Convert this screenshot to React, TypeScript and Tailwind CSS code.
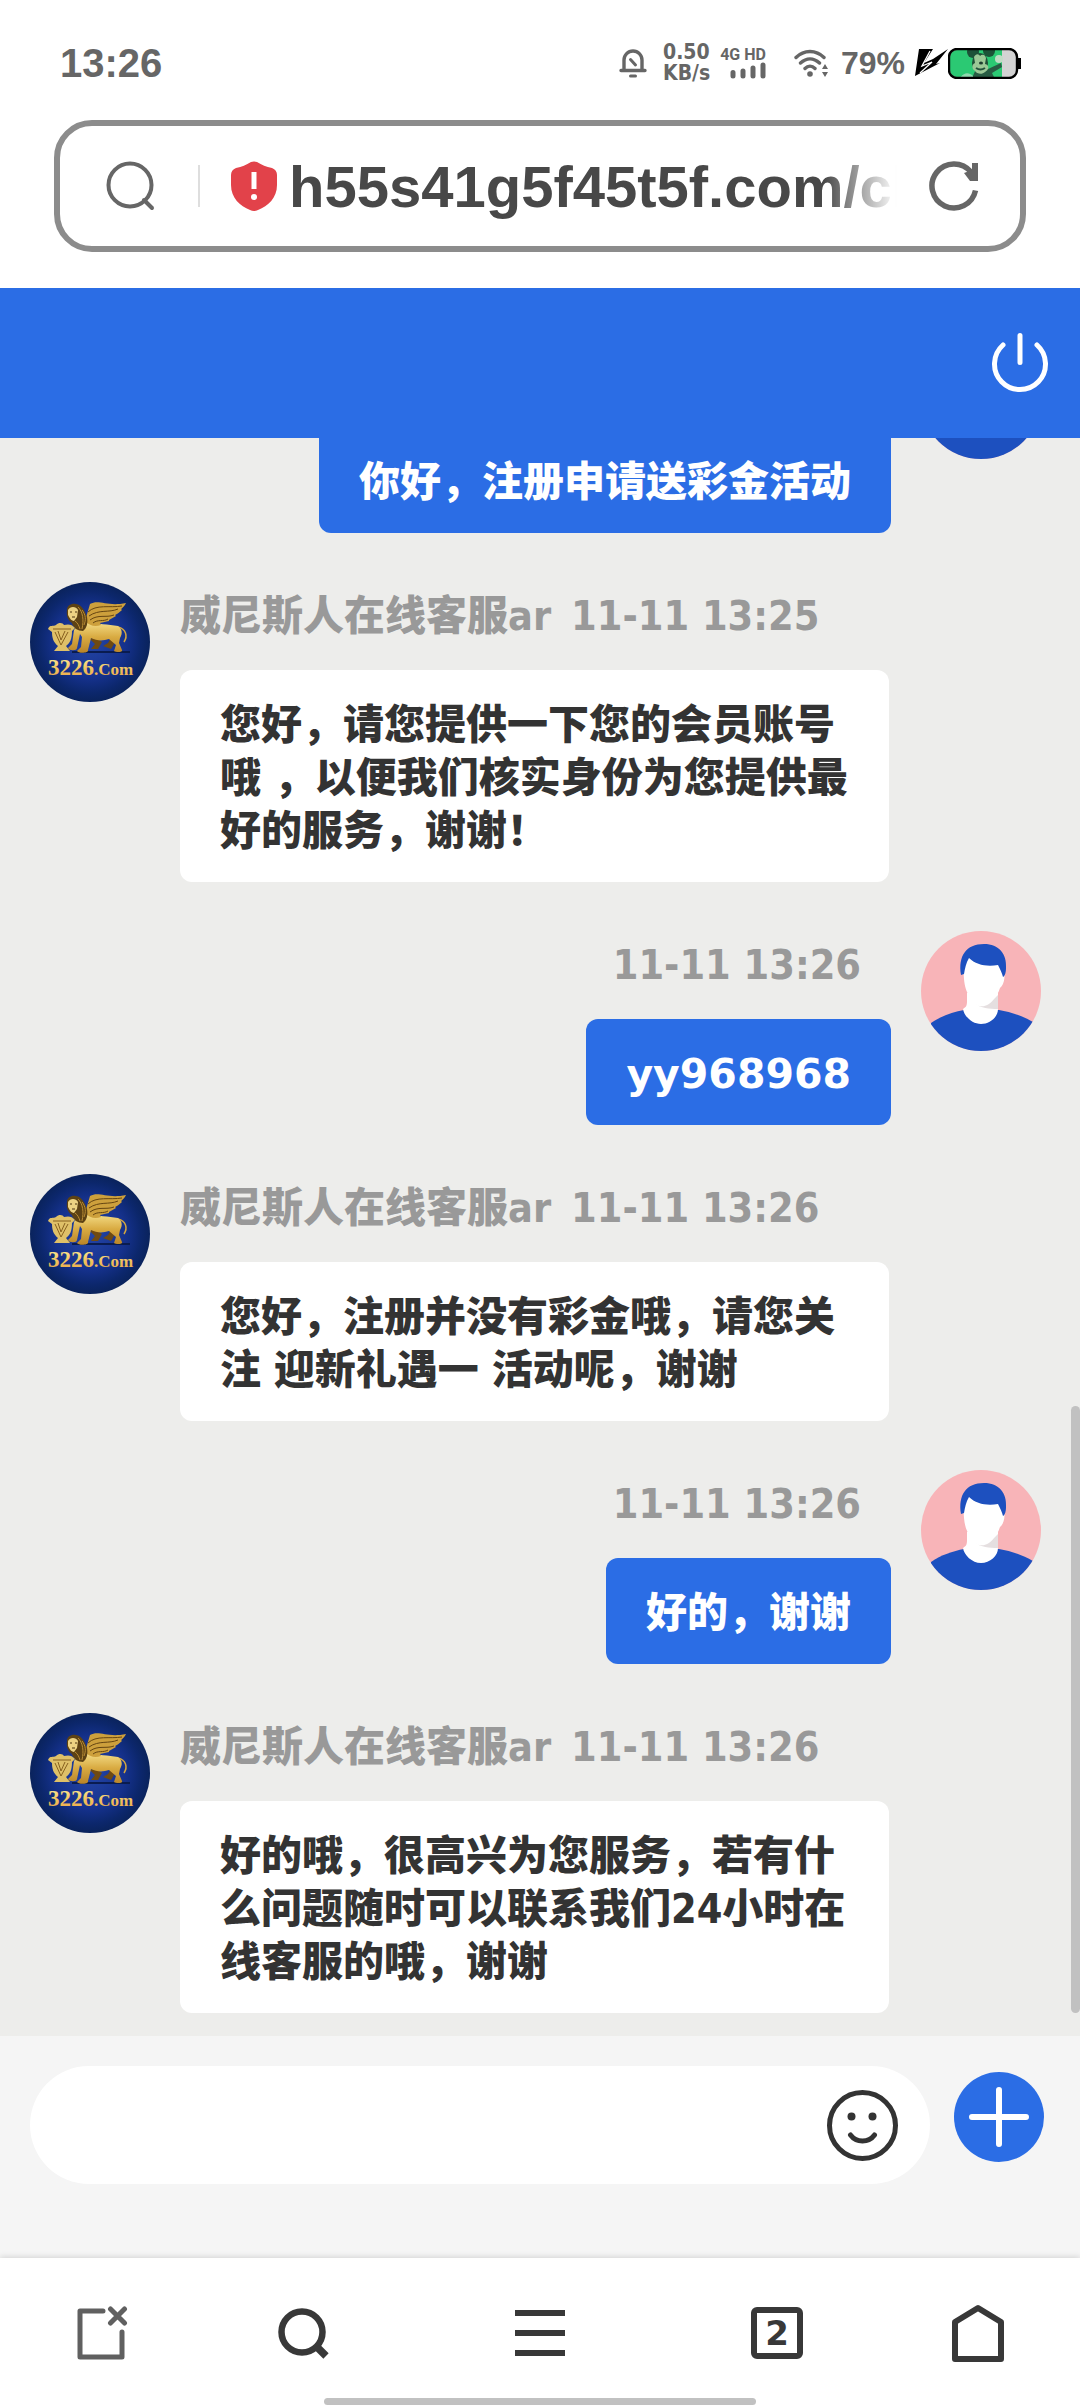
type Message = {
  id: number;
  from: 'agent' | 'user';
  time: string;
  text: string;
};

const AGENT_NAME = '威尼斯人在线客服ar';

const messages: Message[] = [
  { id: 1, from: 'user', time: '11-11 13:25', text: '你好，注册申请送彩金活动' },
  {
    id: 2,
    from: 'agent',
    time: '11-11 13:25',
    text: '您好，请您提供一下您的会员账号哦 ，以便我们核实身份为您提供最好的服务，谢谢！',
  },
  { id: 3, from: 'user', time: '11-11 13:26', text: 'yy968968' },
  {
    id: 4,
    from: 'agent',
    time: '11-11 13:26',
    text: '您好，注册并没有彩金哦，请您关注 迎新礼遇一 活动呢，谢谢',
  },
  { id: 5, from: 'user', time: '11-11 13:26', text: '好的，谢谢' },
  {
    id: 6,
    from: 'agent',
    time: '11-11 13:26',
    text: '好的哦，很高兴为您服务，若有什么问题随时可以联系我们24小时在线客服的哦，谢谢',
  },
];

const AgentAvatar = () => (
  <svg viewBox="0 0 120 120" className="size-[120px] shrink-0" role="img" aria-label="3226.Com">
    <defs>
      <radialGradient id="agentBg">
        <stop offset="0" stopColor="#2445a6" />
        <stop offset="0.6" stopColor="#15318c" />
        <stop offset="0.85" stopColor="#0c276c" />
        <stop offset="1" stopColor="#0a235c" />
      </radialGradient>
      <linearGradient id="gold" x1="0" y1="0" x2="0" y2="1">
        <stop offset="0" stopColor="#f5e08c" />
        <stop offset="0.5" stopColor="#d9ab42" />
        <stop offset="1" stopColor="#b98428" />
      </linearGradient>
      <linearGradient id="goldText" x1="0" y1="0" x2="0" y2="1">
        <stop offset="0" stopColor="#fdf3a0" />
        <stop offset="0.6" stopColor="#f0c05a" />
        <stop offset="1" stopColor="#e8a04c" />
      </linearGradient>
    </defs>
    <circle cx="60" cy="60" r="60" fill="url(#agentBg)" />
    <path d="M42 70h58" stroke="#0a1c50" strokeWidth="2" />
    {/* tail */}
    <path d="M88 45c8 2 10 9 6 15" fill="none" stroke="#d3a640" strokeWidth="1.5" />
    {/* far legs */}
    <path d="M64 55l8 5-4 7h-7l4-5-5-5zM82 54l2 8-3 5-8-3 5-3z" fill="#6f4a12" />
    {/* body and legs */}
    <path
      d="M48 42l10-3c10 4 20 3 30 5 4 3 5 7 2 12l-1 5 3 7c1 2-5 3-8 1l2-6-7-6c-6 2-12 2-18-1l-3 12c1 3-9 4-11 1l4-4 1-10-2-3-3 14c0 3-8 3-9 0l4-4 2-14z"
      fill="url(#gold)"
    />
    {/* wing */}
    <path
      d="M55 39l5-17c9-5 17 3 36-1-2 4-5 6-5 6l1 1c-3 3-7 5-7 5l1 1-7 4 0 1-9 2 1 2c-6 2-11 1-16-4z"
      fill="#cda03c"
    />
    <path
      d="M58 30c8-8 22-4 34-6M59 34c10-7 20-3 29-7M60 38c8-6 16-2 24-5M63 41c5-4 10-1 15-4"
      fill="none"
      stroke="#654512"
      strokeWidth="1"
    />
    {/* mane and face */}
    <path
      d="M37 28c0-5 5-7 9-6 6 1 9 7 11 13 1 6 0 11-4 14-5 0-10-3-11-8-4-2-6-8-5-13z"
      fill="#5d4214"
    />
    <path d="M48 25c5 5 6 13 4 22M45 39c3 2 4 5 5 8M52 28c4 5 4 10 2 15" fill="none" stroke="#b98c34" />
    <path d="M38 28c2-4 8-4 10 0l-1 7-3 4c-3 0-5-4-6-6z" fill="#ecd283" />
    <path d="M40 30h2M45 30h2M42 35h3" stroke="#4c3410" />
    {/* shield */}
    <path
      d="M18 47c2-5 5-2 8-4 3-3 7-2 8 0 4-1 8-1 11 3l-3 3c0 8-2 12-6 15l4 5H24l4-5c-5-4-6-9-6-14z"
      fill="#dfc068"
    />
    <path d="M25 50l6 13 7-13M28 49l3 9 4-9M23 47h18" fill="none" stroke="#87601f" />
    {/* lettering */}
    <g fontFamily="Liberation Serif, serif" fontWeight="700">
      <text x="18" y="93" fontSize="23" fill="url(#goldText)">
        3226<tspan fontSize="17">.Com</tspan>
      </text>
    </g>
  </svg>
);

const UserAvatar = () => (
  <svg viewBox="0 0 120 120" className="size-[120px] shrink-0 rounded-full" role="img" aria-label="我">
    <rect width="120" height="120" fill="#f8b4b8" />
    <path d="M10 92c10-7 22-11 33-13h35c12 2 24 6 34 12v29H10z" fill="#1d50bf" />
    <path d="M46 62h31v16c0 8-8 15-17 15s-17-8-18-15c3-2 4-3 4-8z" fill="#fff" />
    <path d="M54 73c6 4 13 3 19-5l4-4v14c-9 0-17-1-23-5z" fill="#e5dfe0" />
    <path d="M42 35c1-10 9-14 19-14s19 7 20 16c4 5 3 16-2 20-3 10-10 16-18 16-10 0-17-11-18-25z" fill="#fff" />
    <path
      d="M40 44c-3-19 5-31 23-31 15 0 23 10 22 24 0 4-1 8-3 9-1-4-3-8-5-12-11 2-22 0-29-7-3 5-4 10-5 16z"
      fill="#1d50bf"
    />
  </svg>
);

const ChatMessage = ({ message }: { message: Message }) => {
  if (message.from === 'user') {
    return (
      <li className="mb-[49px] flex shrink-0 justify-end gap-[30px] pr-[39px] pl-[191px]">
        <div className="flex min-w-0 flex-col items-end">
          <time className="h-[88px] pt-2 pr-[30px] text-[#999]">{message.time}</time>
          <p className="rounded-xl bg-[#2b6de5] px-10 pt-[29px] pb-6 font-['DejaVu_Sans','Noto_Sans_CJK_SC',sans-serif] text-white">
            {message.text}
          </p>
        </div>
        <UserAvatar />
      </li>
    );
  }

  return (
    <li className="mb-[49px] flex shrink-0 gap-[30px] pr-[191px] pl-[30px] last:mb-[23px]">
      <AgentAvatar />
      <div className="flex min-w-0 flex-col items-start">
        <div className="flex h-[88px] gap-5 pt-2 whitespace-nowrap text-[#999]">
          <span>{AGENT_NAME}</span>
          <time>{message.time}</time>
        </div>
        <p className="rounded-xl bg-white px-10 pt-[29px] pb-6 text-[#333]">{message.text}</p>
      </div>
    </li>
  );
};

const StatusBar = () => (
  <div className="flex h-[120px] items-center pt-1.5 pr-[59px] pl-[60px] text-[#666]">
    <time className="flex-1 text-[40px] leading-none font-bold">13:26</time>

    {/* Silent bell */}
    <svg viewBox="0 0 28 30" className="mr-[16px] h-[30px] w-[28px]" fill="none" stroke="currentColor" strokeLinecap="round">
      <path d="M5 22V12a9 9 0 0 1 18 0v10M2 22.500h24" strokeWidth="3.400" />
      <path d="M11.500 11.500l5 5.500" strokeWidth="3" />
      <path d="M11.500 28h5" strokeWidth="3" />
    </svg>

    <div className="mr-[10px] font-['DejaVu_Sans_Condensed'] text-[21px] leading-[21px] font-bold">
      <div>0.50</div>
      <div>KB/s</div>
    </div>

    <div className="mr-[28px] flex flex-col items-end">
      <span className="font-[Roboto] text-[16px] leading-[14px] font-bold">4G HD</span>
      <svg viewBox="0 0 36 17" className="h-[17px] w-[36px]" stroke="currentColor" strokeWidth="5" strokeLinecap="round">
        <path d="M3 10.500v3.500M13 9v5M23 6v8M33 3v11" />
      </svg>
    </div>

    <svg viewBox="0 0 34 28" className="mr-[13px] h-[28px] w-[34px]" fill="none" stroke="currentColor" strokeWidth="3.400" strokeLinecap="round">
      <path d="M2 8.500C10 .5 22 .5 30 8.500M6.500 14c6-5.500 13-5.500 19 0M11 19.500c3-3 7-3 10 0" />
      <circle cx="16" cy="25" r="2.800" fill="currentColor" stroke="none" />
      <path d="M31 15l3 5h-6zM31 28l3-5h-6z" fill="currentColor" stroke="none" />
    </svg>

    <span className="mr-[10px] text-[32px] leading-none font-bold">79%</span>

    {/* Charging bolt */}
    <svg viewBox="0 0 33 28" className="h-[28px] w-[33px]" fill="#000">
      <path d="M4 0h14L9 14l9-4L33 0 21 15l4-1L0 27z" />
      <path d="M15 2L7 17l10-4L5 24" fill="none" stroke="#fff" strokeWidth="1.300" />
    </svg>

    <svg viewBox="0 0 73 31" className="h-[31px] w-[73px]">
      <defs>
        <clipPath id="batteryClip">
          <rect x="2" y="2" width="66" height="27" rx="7" />
        </clipPath>
      </defs>
      <g clipPath="url(#batteryClip)">
        <rect width="73" height="31" fill="#d3d3d3" />
        <rect width="54" height="31" fill="#2bc973" />
        <circle cx="25" cy="4" r="6" fill="#1c5238" />
        <circle cx="41" cy="3" r="6" fill="#1c5238" />
        <path d="M24 30l4-9c4-3 9-3 12 0l13-6 1 4-10 6 3 6z" fill="#285c43" />
        <ellipse cx="32" cy="15" rx="8" ry="10" fill="#204f38" />
        <path d="M26 9c2-4 5-3 6-1 2-2 5-2 6 2l-1 6c5 1 4 6 0 8-3 3-8 2-10-1-3-2-4-6 0-8z" fill="#9bc896" />
        <path d="M28 20c3 2 6 2 9 0" fill="none" stroke="#23523b" strokeWidth="2" />
        <ellipse cx="33" cy="15" rx="2" ry="1.500" fill="#1d3c2e" />
        <circle cx="51" cy="11" r="4" fill="#bfdcc4" />
        <path d="M12 30c4-6 9-6 13-2v3z" fill="#8fd9ae" />
      </g>
      <rect x="1" y="1" width="68" height="29" rx="8" fill="none" stroke="#000" strokeWidth="2.400" />
      <path d="M70 10h3v11h-3z" />
    </svg>
  </div>
);

const AddressBar = () => (
  <div className="mx-[54px] mb-9 flex h-[132px] items-center rounded-[38px] border-6 border-[#8c8c8c] bg-white pr-[41px] pl-[46px]">
    <button type="button" aria-label="搜索" className="mr-[42px] shrink-0">
      <svg viewBox="0 0 50 50" className="size-[50px]" fill="none" stroke="#666" strokeWidth="4">
        <circle cx="24" cy="24" r="21.500" />
        <path d="M38 39l8 8" strokeLinecap="round" />
      </svg>
    </button>
    <span className="mr-[31px] h-[42px] w-0.5 shrink-0 bg-[#dedede]" />
    <svg viewBox="0 0 46 50" className="mr-[12px] h-[50px] w-[46px] shrink-0">
      <path
        d="M20 1q3-1 6 0c5 3 9 5 15 6q5 2 5 7v10c0 13-9 21-19 25q-4 2-8 0C9 45 0 37 0 24V14q0-5 5-7c6-1 10-3 15-6z"
        fill="#e2424a"
      />
      <path d="M20.500 11h5v17h-5z" fill="#fff" />
      <circle cx="23" cy="36" r="3" fill="#fff" />
    </svg>
    <input
      type="text"
      aria-label="网址"
      defaultValue="h55s41g5f45t5f.com/ch"
      className="h-20 min-w-0 flex-1 bg-transparent text-[58px] font-bold text-[#484848] outline-none [mask-image:linear-gradient(to_right,black_88%,transparent)]"
    />
    <button type="button" aria-label="刷新" className="ml-[32px] shrink-0">
      <svg viewBox="0 0 50 50" className="size-[50px]" fill="none" stroke="#666" strokeWidth="5.500">
        <path d="M46.500 29.500A22 22 0 1 1 42 11" />
        <path d="M43 2h6v18h-8l-6-8 8-3z" fill="#666" stroke="none" />
      </svg>
    </button>
  </div>
);

const Composer = () => (
  <div className="flex shrink-0 gap-6 bg-[#f5f5f5] pt-[30px] pr-9 pb-[74px] pl-[30px]">
    <div className="flex h-[118px] flex-1 items-center rounded-full bg-white pr-8 pl-12">
      <input type="text" aria-label="输入消息" className="h-full min-w-0 flex-1 bg-transparent outline-none" />
      <button type="button" aria-label="表情">
        <svg viewBox="0 0 71 71" className="size-[71px]" fill="none" stroke="#333" strokeWidth="5">
          <circle cx="35.500" cy="35.500" r="33" />
          <path d="M23.500 45c6 8 18 8 24 0" strokeLinecap="round" />
          <circle cx="24.500" cy="26.500" r="4" fill="#333" stroke="none" />
          <circle cx="45.500" cy="26.500" r="4" fill="#333" stroke="none" />
        </svg>
      </button>
    </div>
    <button type="button" aria-label="更多" className="mt-1.5 size-[90px] shrink-0 rounded-full bg-[#2b6de5]">
      <svg viewBox="0 0 90 90" stroke="#fff" strokeWidth="6" strokeLinecap="round">
        <path d="M45 18v54M18 45h54" />
      </svg>
    </button>
  </div>
);

const BrowserNav = () => (
  <nav className="relative shrink-0 bg-white shadow-[0_-1px_6px_rgba(0,0,0,0.14)]">
    <div className="grid h-[140px] grid-cols-[204fr_198fr_276fr_198fr_204fr] place-items-center pt-2.5">
      <button type="button" aria-label="关闭页面">
        <svg viewBox="0 0 52 56" className="h-[56px] w-[52px]" fill="none" stroke="#606060" strokeWidth="5" strokeLinecap="round" strokeLinejoin="round">
          <path d="M27 6H4v46h42V27" />
          <path d="M34.500 4l14 14M48.500 4l-14 14" />
        </svg>
      </button>
      <button type="button" aria-label="搜索">
        <svg viewBox="0 0 52 56" className="h-[56px] w-[52px]" fill="none" stroke="#383838" strokeWidth="6.500">
          <circle cx="25" cy="27" r="20.500" />
          <path d="M40 42l9 9" strokeWidth="7.500" />
        </svg>
      </button>
      <button type="button" aria-label="菜单">
        <svg viewBox="0 0 52 56" className="h-[56px] w-[52px]" stroke="#383838" strokeWidth="6">
          <path d="M1 8h50M1 28h50M1 48h50" />
        </svg>
      </button>
      <button
        type="button"
        aria-label="标签页"
        className="flex size-[52px] items-center justify-center rounded-md border-6 border-[#383838] font-['DejaVu_Sans'] text-[34px] leading-none font-bold text-[#383838]"
      >
        2
      </button>
      <button type="button" aria-label="主页">
        <svg viewBox="0 0 52 58" className="h-[58px] w-[52px]" fill="none" stroke="#383838" strokeWidth="6" strokeLinejoin="round">
          <path d="M3 18L26 4l23 14v37H3z" />
        </svg>
      </button>
    </div>
    <div className="mx-auto mb-[3px] h-[7px] w-2/5 rounded-full bg-[#c1c1c1]" />
  </nav>
);

const App = () => {
  return (
    <div className="flex h-screen flex-col overflow-hidden bg-white font-['Liberation_Sans','Noto_Sans_CJK_SC',sans-serif]">
      <StatusBar />
      <AddressBar />

      <header className="flex h-[150px] shrink-0 items-center justify-end bg-[#2b6de5] pr-[30px]">
        <button type="button" aria-label="退出">
          <svg viewBox="0 0 60 64" className="h-[64px] w-[60px]" fill="none" stroke="#fff" strokeWidth="5" strokeLinecap="round">
            <path d="M30 4.500v27M13 14a25.500 25.500 0 1 0 34 0" />
          </svg>
        </button>
      </header>

      {/* Messages */}
      <main className="relative min-h-0 flex-1 bg-[#ededeb]">
        <ul className="flex h-full flex-col justify-end overflow-hidden font-['DejaVu_Sans_Condensed','Noto_Sans_CJK_SC',sans-serif] text-[41px] leading-[53px] font-black">
          {messages.map((message) => (
            <ChatMessage key={message.id} message={message} />
          ))}
        </ul>
        <span className="absolute right-0 bottom-[23px] h-[38%] w-[9px] rounded-full bg-[#c1c1c1]" />
      </main>

      <Composer />
      <BrowserNav />
    </div>
  );
};

export default App;
